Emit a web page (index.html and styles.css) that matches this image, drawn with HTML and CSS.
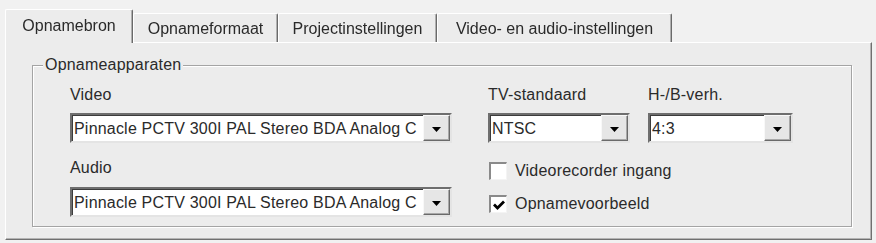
FILE: index.html
```html
<!DOCTYPE html>
<html>
<head>
<meta charset="utf-8">
<link rel="stylesheet" href="styles.css">
</head>
<body>
<div class="dialog">
  <div class="tabs">
    <div class="tab active t1">Opnamebron</div>
    <div class="tab t2">Opnameformaat</div>
    <div class="tab t3">Projectinstellingen</div>
    <div class="tab t4">Video- en audio-instellingen</div>
  </div>
  <div class="panel">
    <div class="group">
      <span class="legend">Opnameapparaten</span>
      <div class="col-left">
        <div class="label">Video</div>
        <div class="combo wide">
          <span class="val">Pinnacle PCTV 300I PAL Stereo BDA Analog C</span>
          <span class="btn"><svg width="9" height="5" viewBox="0 0 9 5"><path d="M0 0H9L4.5 5Z" fill="#000"/></svg></span>
        </div>
        <div class="label audio">Audio</div>
        <div class="combo wide">
          <span class="val">Pinnacle PCTV 300I PAL Stereo BDA Analog C</span>
          <span class="btn"><svg width="9" height="5" viewBox="0 0 9 5"><path d="M0 0H9L4.5 5Z" fill="#000"/></svg></span>
        </div>
      </div>
      <div class="col-right">
        <div class="row">
          <div class="field tv">
            <div class="label">TV-standaard</div>
            <div class="combo">
              <span class="val">NTSC</span>
              <span class="btn"><svg width="9" height="5" viewBox="0 0 9 5"><path d="M0 0H9L4.5 5Z" fill="#000"/></svg></span>
            </div>
          </div>
          <div class="field ar">
            <div class="label">H-/B-verh.</div>
            <div class="combo">
              <span class="val">4:3</span>
              <span class="btn"><svg width="9" height="5" viewBox="0 0 9 5"><path d="M0 0H9L4.5 5Z" fill="#000"/></svg></span>
            </div>
          </div>
        </div>
        <div class="check first"><span class="box"></span><span>Videorecorder ingang</span></div>
        <div class="check second"><span class="box"><svg width="12" height="10" viewBox="0 0 12 10"><path d="M1 4.5L4.5 8L11 1.5" fill="none" stroke="#000" stroke-width="2.8"/></svg></span><span>Opnamevoorbeeld</span></div>
      </div>
    </div>
  </div>
</div>
</body>
</html>
```

FILE: styles.css
```css
html, body {
  margin: 0;
  background: #f1f1f1;
}
body {
  font-family: "Liberation Sans", Arial, sans-serif;
  font-size: 16px;
  letter-spacing: 0.2px;
  color: #2a2a2a;
}
.dialog {
  padding: 9px 4px 3px 5px;
  filter: blur(0.3px);
}
.tabs {
  display: flex;
  align-items: flex-end;
  height: 33px;
  position: relative;
  z-index: 1;
}
.tab {
  box-sizing: border-box;
  height: 29px;
  display: flex;
  align-items: center;
  justify-content: center;
  background: #ececec;
  border-top: 1px solid #fff;
  border-left: 1px solid #fff;
  border-right: 1px solid #6a6a6a;
  box-shadow: inset -1px 0 #b0b0b0;
  border-radius: 2px 2px 0 0;
  padding-top: 2px;
  white-space: nowrap;
  letter-spacing: 0;
}
.tab.active {
  height: 34px;
  margin-bottom: -1px;
  padding-top: 0;
  padding-bottom: 1px;
}
.t1 { width: 128px; }
.t2 { width: 145px; }
.t3 { width: 159px; }
.t4 { width: 235px; }
.panel {
  box-sizing: border-box;
  width: 867px;
  height: 198px;
  background: #ececec;
  border-top: 1px solid #fff;
  border-left: 1px solid #fff;
  border-right: 1px solid #707070;
  border-bottom: 1px solid #707070;
  box-shadow: inset -1px -1px #b4b4b4;
  padding: 22px 19px 0 26px;
}
.group {
  position: relative;
  box-sizing: border-box;
  width: 820px;
  height: 162px;
  border: 1px solid #a4a4a4;
  box-shadow: inset 1px 1px #fff, 1px 1px #fff;
  display: flex;
  padding: 20px 0 0 37px;
}
.legend {
  position: absolute;
  top: -10px;
  left: 10px;
  padding: 0 2px;
  background: #ececec;
  line-height: 18px;
}
.label {
  line-height: 18px;
  height: 18px;
}
.col-left {
  width: 382px;
  display: flex;
  flex-direction: column;
}
.col-left .label { margin-bottom: 9px; }
.col-left .label.audio { margin-top: 16px; margin-bottom: 10px; }
.combo {
  box-sizing: border-box;
  height: 30px;
  background: #fff;
  border-top: 2px solid #6e6e6e;
  border-left: 2px solid #6e6e6e;
  border-right: 2px solid #e4e4e4;
  border-bottom: 2px solid #e4e4e4;
  box-shadow: inset 1px 1px #3c3c3c;
  display: flex;
  align-items: center;
  padding-left: 2px;
}
.combo .val {
  flex: 1;
  white-space: nowrap;
  overflow: hidden;
  padding-top: 1px;
}
.btn {
  box-sizing: border-box;
  width: 27px;
  height: 26px;
  background: #e6e6e6;
  border-top: 1px solid #f8f8f8;
  border-left: 1px solid #f8f8f8;
  border-right: 1px solid #6a6a6a;
  border-bottom: 1px solid #6a6a6a;
  box-shadow: inset -1px -1px #a8a8a8;
  display: flex;
  align-items: center;
  justify-content: center;
  padding-top: 3px;
  flex: none;
}
.col-right {
  margin-left: 36px;
  display: flex;
  flex-direction: column;
}
.row {
  display: flex;
  gap: 18px;
}
.field .label { margin-bottom: 9px; }
.field.tv { width: 142px; }
.field.ar { width: 145px; }
.check {
  display: flex;
  align-items: center;
  gap: 8px;
  margin-left: 1px;
  height: 18px;
  line-height: 18px;
}
.check.first { margin-top: 19px; }
.check.second { margin-top: 15px; }
.box {
  box-sizing: border-box;
  width: 18px;
  height: 18px;
  background: #fff;
  border-top: 2px solid #8a8a8a;
  border-left: 2px solid #8a8a8a;
  border-right: 1px solid #f4f4f4;
  border-bottom: 1px solid #f4f4f4;
  display: flex;
  align-items: center;
  justify-content: center;
  flex: none;
}
```
